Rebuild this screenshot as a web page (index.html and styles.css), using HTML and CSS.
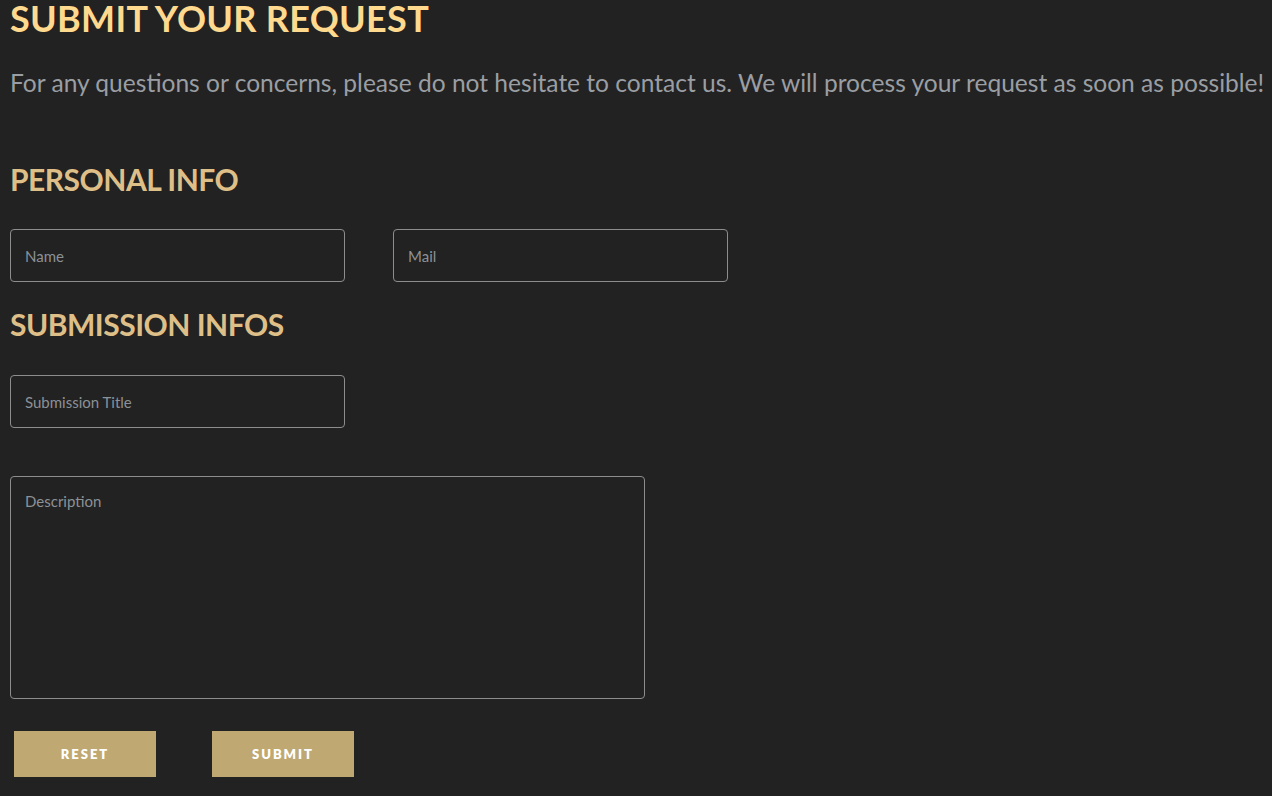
FILE: index.html
```html
<!DOCTYPE html>
<html lang="en">
<head>
<meta charset="utf-8">
<title>Submit your request</title>
<link rel="stylesheet" href="styles.css">
</head>
<body>
<main class="page">
  <h1 class="title">SUBMIT YOUR REQUEST</h1>
  <p class="lead">For any questions or concerns, please do not hesitate to contact us. We will process your request as soon as possible!</p>
  <form class="form">
    <h2 class="section section-personal">PERSONAL INFO</h2>
    <div class="row">
      <input class="field" type="text" placeholder="Name">
      <input class="field" type="email" placeholder="Mail">
    </div>
    <h2 class="section section-submission">SUBMISSION INFOS</h2>
    <input class="field" type="text" placeholder="Submission Title">
    <textarea class="field area" placeholder="Description"></textarea>
    <div class="actions">
      <button class="btn" type="reset">RESET</button>
      <button class="btn" type="submit">SUBMIT</button>
    </div>
  </form>
</main>
</body>
</html>
```

FILE: styles.css
```css
html, body {
  margin: 0;
  padding: 0;
  background: #222222;
}
body {
  font-family: Lato, "Noto Sans", sans-serif;
}
.page {
  padding: 0 10px;
  display: flex;
  flex-direction: column;
  align-items: flex-start;
}
.title {
  margin: 0;
  font-size: 36px;
  line-height: 36px;
  font-weight: 700;
  color: #fed98e;
  letter-spacing: 0.3px;
}
.lead {
  margin: 32px 0 0;
  font-size: 24.55px;
  line-height: 30px;
  color: #9a9ea3;
  white-space: nowrap;
}
.form {
  display: flex;
  flex-direction: column;
  align-items: flex-start;
}
.section {
  margin: 0;
  font-size: 30px;
  line-height: 36px;
  font-weight: 700;
  letter-spacing: -0.5px;
  color: #dfbf88;
}
.section-personal {
  margin-top: 63px;
}
.section-submission {
  margin-top: 24px;
}
.row {
  display: flex;
  gap: 48px;
  margin-top: 32px;
}
.field {
  box-sizing: border-box;
  width: 335px;
  height: 53px;
  margin: 0;
  padding: 0 14px;
  background: transparent;
  border: 1px solid #8d8d8d;
  border-radius: 4px;
  font-family: inherit;
  font-size: 15px;
  color: #ddd;
  outline: none;
}
.section-submission + .field {
  margin-top: 33px;
}
.field::placeholder {
  color: #8c9196;
}
.area {
  width: 635px;
  height: 223px;
  margin-top: 48px;
  padding: 15px 14px;
  resize: none;
}
.actions {
  display: flex;
  gap: 56px;
  margin: 32px 0 0 4px;
}
.btn {
  width: 142px;
  height: 46px;
  border: 0;
  border-radius: 0;
  background: #c0a872;
  color: #ffffff;
  font-family: inherit;
  font-size: 13px;
  font-weight: 800;
  letter-spacing: 2px;
  padding: 0;
}
```
